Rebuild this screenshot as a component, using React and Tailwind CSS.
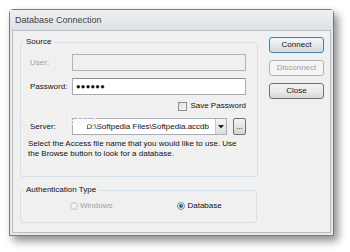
import React from "react";

const font = { fontFamily: '"Liberation Sans", Arial, sans-serif' };

function Btn({ children, variant }) {
  if (variant === "default") {
    return (
      <div className="h-[16px] w-[55px] rounded-[3px] border border-[#3c7fb1] bg-gradient-to-b from-[#eaf6fd] to-[#bee6fd] p-[1px]">
        <div className="flex h-full w-full items-center justify-center rounded-[2px] bg-gradient-to-b from-[#f6f6f6] via-[#e9e9e9] to-[#d8d8d8] text-[8px] leading-none text-[#111]">
          {children}
        </div>
      </div>
    );
  }
  if (variant === "disabled") {
    return (
      <div className="flex h-[16px] w-[55px] items-center justify-center rounded-[3px] border border-[#adb2b5] bg-[#f4f4f4] text-[8px] leading-none text-[#a0a0a0]">
        {children}
      </div>
    );
  }
  return (
    <div className="flex h-[16px] w-[55px] items-center justify-center rounded-[3px] border border-[#707070] bg-gradient-to-b from-[#f2f2f2] via-[#ebebeb] to-[#d6d6d6] text-[8px] leading-none text-[#111]">
      {children}
    </div>
  );
}

export default function App() {
  return (
    <div className="h-[252px] w-[350px] overflow-hidden bg-white pl-[9px] pt-[9px]" style={font}>
      <div className="flex h-[227px] w-[325px] flex-col rounded-t-[4px] border border-[#7a7a7a] bg-[#e5e8ec] shadow-[4px_5px_8px_rgba(0,0,0,0.45)]">
        <div className="flex h-[20px] items-center bg-gradient-to-b from-[#eef0f3] to-[#dde2e7] pl-[5px] text-[9px] leading-none text-[#3f3f3f]">
          Database Connection
        </div>
        <div className="mx-[2px] mb-[2px] flex flex-1 border border-[#b9bec3] bg-[#f0f0f0] pl-[7px] pr-[8px]">
          <div className="flex w-[237px] flex-col">
            <fieldset className="mt-[5px] h-[141px] rounded-[3px] border border-[#d5dfe5] p-0">
              <legend className="ml-[2px] px-[3px] text-[8px] leading-[12px] text-[#111]">Source</legend>
              <div className="pl-[9px] pr-[11px]">
                <div className="mt-[6px] flex h-[17px] items-center">
                  <div className="w-[42px] text-[8px] text-[#a0a0a0]">User:</div>
                  <div className="h-[17px] flex-1 border border-[#adb2b5] bg-[#f0f0f0]" />
                </div>
                <div className="mt-[7px] flex h-[17px] items-center">
                  <div className="w-[42px] text-[8px] text-[#111]">Password:</div>
                  <div className="flex h-[17px] flex-1 items-center border border-[#abadb3] border-t-[#8e8f8f] bg-white pl-[3px] text-[7.5px] leading-none tracking-[0.3px] text-[#111]">
                    ●●●●●●
                  </div>
                </div>
                <div className="mt-[6px] flex h-[10px] items-center justify-end">
                  <div className="mr-[3px] h-[9px] w-[9px] border border-[#8e8f8f] bg-gradient-to-br from-[#dcdcdc] to-[#fafafa]" />
                  <div className="text-[8px] leading-none text-[#111]">Save Password</div>
                </div>
                <div className="relative mt-[7px] flex h-[17px] items-center">
                  <div className="w-[42px] text-[8px] text-[#111]">Server:</div>
                  <div className="flex h-[17px] w-[155px] items-center border border-[#abadb3] bg-white">
                    <div className="ml-[14px] flex flex-1 justify-end overflow-hidden whitespace-nowrap pr-[6px] text-[8px] leading-none text-[#111]">
                      D:\Softpedia Files\Softpedia.accdb
                    </div>
                    <div className="flex h-[15px] w-[11px] items-center justify-center border-l border-[#c9c9c9] bg-gradient-to-b from-[#f4f4f4] to-[#dedede]">
                      <svg width="6" height="4" viewBox="0 0 6 4"><path d="M0 0h6L3 3.5z" fill="#222" /></svg>
                    </div>
                  </div>
                  <div className="ml-[6px] flex h-[17px] w-[13px] items-end justify-center rounded-[2px] border border-[#707070] bg-gradient-to-b from-[#f2f2f2] to-[#d6d6d6] pb-[3px] text-[8px] leading-none text-[#111]">
                    ...
                  </div>
                  <div className="pointer-events-none absolute left-[-8px] top-[-3px] text-[12px] font-bold leading-none tracking-[1px] text-white/80 [text-shadow:0_0_1px_rgba(0,0,0,0.12)]">
                    SOFTPEDIA
                  </div>
                </div>
                <div className="ml-[-2px] mt-[4px] text-[8px] leading-[10px] text-[#111]">
                  Select the Access file name that you would like to use. Use the Browse button to look for a database.
                </div>
              </div>
            </fieldset>
            <fieldset className="mt-[7px] h-[39px] rounded-[3px] border border-[#d5dfe5] p-0">
              <legend className="ml-[2px] px-[3px] text-[8px] leading-[12px] text-[#111]">Authentication Type</legend>
              <div className="mt-[6px] flex items-center">
                <div className="ml-[49px] flex items-center">
                  <div className="mr-[2px] h-[8px] w-[8px] rounded-full border border-[#c0c4c8] bg-[#f4f4f4]" />
                  <span className="text-[8px] leading-none text-[#a0a0a0]">Windows</span>
                </div>
                <div className="ml-[65px] flex items-center">
                  <div className="mr-[2px] flex h-[8px] w-[8px] items-center justify-center rounded-full border border-[#8e8f8f] bg-[#eaeaea]">
                    <div className="h-[4px] w-[4px] rounded-full bg-[#2a6fb0]" />
                  </div>
                  <span className="text-[8px] leading-none text-[#111]">Database</span>
                </div>
              </div>
            </fieldset>
          </div>
          <div className="ml-[12px] mt-[6px] flex flex-col gap-[7px]">
            <Btn variant="default">Connect</Btn>
            <Btn variant="disabled">Disconnect</Btn>
            <Btn>Close</Btn>
          </div>
        </div>
      </div>
    </div>
  );
}
